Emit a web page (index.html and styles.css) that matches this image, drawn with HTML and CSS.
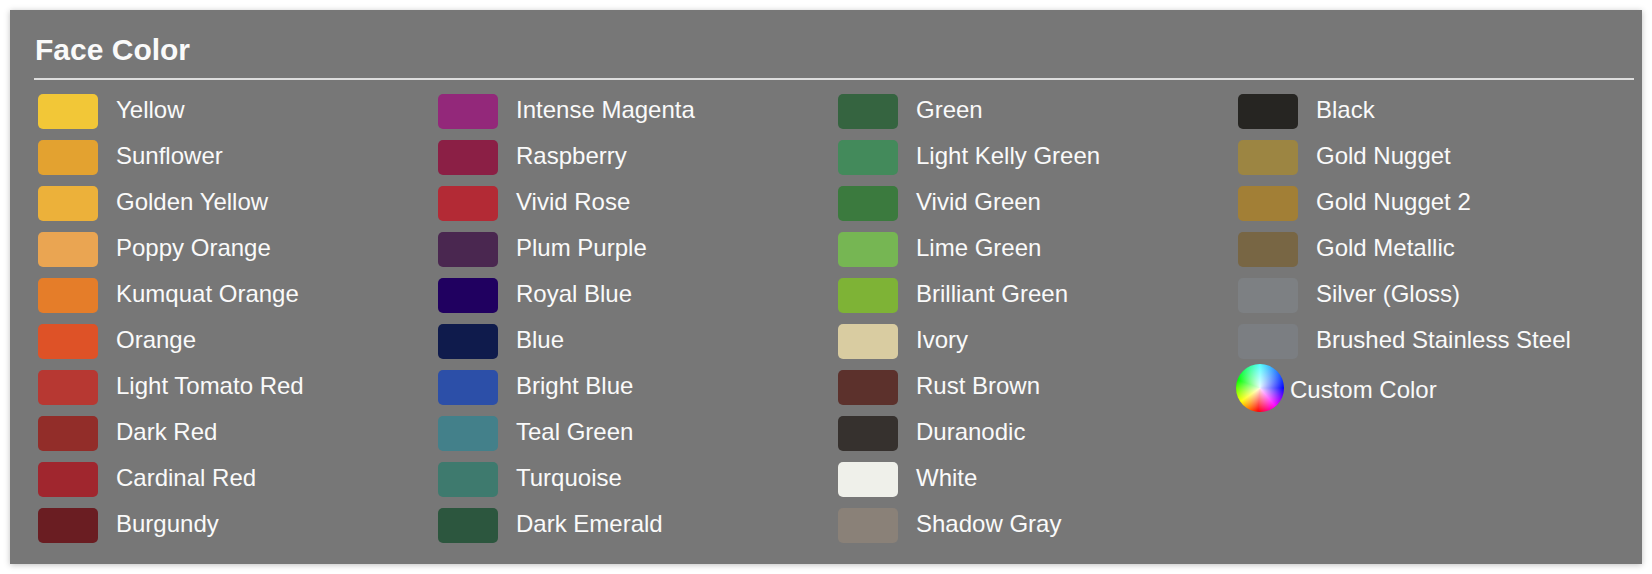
FILE: index.html
```html
<!DOCTYPE html>
<html lang="en">
<head>
    <meta charset="UTF-8">
    <meta name="viewport" content="width=device-width, initial-scale=1.0">
    <title>Face Color</title>
    <link rel="stylesheet" href="styles.css">
</head>
<body>
    <section class="panel">
        <h2 class="panel-title">Face Color</h2>
        <div class="color-grid">
            <ul class="color-column">
                <li class="color-option"><span class="swatch" style="background:#f2c737"></span><span class="color-name">Yellow</span></li>
                <li class="color-option"><span class="swatch" style="background:#e3a230"></span><span class="color-name">Sunflower</span></li>
                <li class="color-option"><span class="swatch" style="background:#ecb13a"></span><span class="color-name">Golden Yellow</span></li>
                <li class="color-option"><span class="swatch" style="background:#eaa552"></span><span class="color-name">Poppy Orange</span></li>
                <li class="color-option"><span class="swatch" style="background:#e57d29"></span><span class="color-name">Kumquat Orange</span></li>
                <li class="color-option"><span class="swatch" style="background:#de5227"></span><span class="color-name">Orange</span></li>
                <li class="color-option"><span class="swatch" style="background:#b73832"></span><span class="color-name">Light Tomato Red</span></li>
                <li class="color-option"><span class="swatch" style="background:#922d29"></span><span class="color-name">Dark Red</span></li>
                <li class="color-option"><span class="swatch" style="background:#a0262e"></span><span class="color-name">Cardinal Red</span></li>
                <li class="color-option"><span class="swatch" style="background:#6a1d22"></span><span class="color-name">Burgundy</span></li>
            </ul>
            <ul class="color-column">
                <li class="color-option"><span class="swatch" style="background:#93287a"></span><span class="color-name">Intense Magenta</span></li>
                <li class="color-option"><span class="swatch" style="background:#8b1f45"></span><span class="color-name">Raspberry</span></li>
                <li class="color-option"><span class="swatch" style="background:#b32a35"></span><span class="color-name">Vivid Rose</span></li>
                <li class="color-option"><span class="swatch" style="background:#4a2750"></span><span class="color-name">Plum Purple</span></li>
                <li class="color-option"><span class="swatch" style="background:#200060"></span><span class="color-name">Royal Blue</span></li>
                <li class="color-option"><span class="swatch" style="background:#0f1b4c"></span><span class="color-name">Blue</span></li>
                <li class="color-option"><span class="swatch" style="background:#2c4fa8"></span><span class="color-name">Bright Blue</span></li>
                <li class="color-option"><span class="swatch" style="background:#43808a"></span><span class="color-name">Teal Green</span></li>
                <li class="color-option"><span class="swatch" style="background:#3e7a6e"></span><span class="color-name">Turquoise</span></li>
                <li class="color-option"><span class="swatch" style="background:#2c563e"></span><span class="color-name">Dark Emerald</span></li>
            </ul>
            <ul class="color-column">
                <li class="color-option"><span class="swatch" style="background:#356440"></span><span class="color-name">Green</span></li>
                <li class="color-option"><span class="swatch" style="background:#438a5b"></span><span class="color-name">Light Kelly Green</span></li>
                <li class="color-option"><span class="swatch" style="background:#3b7a3e"></span><span class="color-name">Vivid Green</span></li>
                <li class="color-option"><span class="swatch" style="background:#76b653"></span><span class="color-name">Lime Green</span></li>
                <li class="color-option"><span class="swatch" style="background:#7eb336"></span><span class="color-name">Brilliant Green</span></li>
                <li class="color-option"><span class="swatch" style="background:#d9cca1"></span><span class="color-name">Ivory</span></li>
                <li class="color-option"><span class="swatch" style="background:#5c312c"></span><span class="color-name">Rust Brown</span></li>
                <li class="color-option"><span class="swatch" style="background:#36312e"></span><span class="color-name">Duranodic</span></li>
                <li class="color-option"><span class="swatch" style="background:#eff0ea"></span><span class="color-name">White</span></li>
                <li class="color-option"><span class="swatch" style="background:#8a8178"></span><span class="color-name">Shadow Gray</span></li>
            </ul>
            <ul class="color-column">
                <li class="color-option"><span class="swatch" style="background:#262522"></span><span class="color-name">Black</span></li>
                <li class="color-option"><span class="swatch" style="background:#9c8542"></span><span class="color-name">Gold Nugget</span></li>
                <li class="color-option"><span class="swatch" style="background:#a27f36"></span><span class="color-name">Gold Nugget 2</span></li>
                <li class="color-option"><span class="swatch" style="background:#786644"></span><span class="color-name">Gold Metallic</span></li>
                <li class="color-option"><span class="swatch" style="background:#7d8083"></span><span class="color-name">Silver (Gloss)</span></li>
                <li class="color-option"><span class="swatch" style="background:#7b7e82"></span><span class="color-name">Brushed Stainless Steel</span></li>
                <li class="color-option custom"><span class="color-wheel"></span><span class="color-name">Custom Color</span></li>
            </ul>
        </div>
    </section>
</body>
</html>
```

FILE: styles.css
```css
body {
    margin: 0;
    padding: 10px;
    background-color: #fff;
    font-family: "Liberation Sans", Arial, sans-serif;
}

.panel {
    width: 1632px;
    height: 554px;
    box-sizing: border-box;
    padding: 23px 8px 0 24px;
    background-color: #777;
    box-shadow: 0 1px 6px rgba(0, 0, 0, 0.25);
}

.panel-title {
    margin: 0;
    padding: 0 0 11px 1px;
    font-size: 30px;
    font-weight: bold;
    color: #fafafa;
    border-bottom: 2px solid #ddd;
}

.color-grid {
    display: grid;
    grid-template-columns: repeat(4, 400px);
    margin-top: 14px;
}

.color-column {
    list-style: none;
    margin: 0;
    padding: 0 0 0 4px;
    display: flex;
    flex-direction: column;
    gap: 11px;
}

.color-option {
    display: flex;
    align-items: flex-start;
    height: 35px;
    cursor: pointer;
}

.swatch {
    flex: none;
    width: 60px;
    height: 35px;
    border-radius: 5px;
    margin-right: 18px;
}

.color-name {
    font-size: 24px;
    line-height: 31px;
    color: #fafafa;
}

.color-option.custom {
    align-items: center;
}

.color-wheel {
    flex: none;
    width: 48px;
    height: 48px;
    margin: 0 6px 0 -2px;
    border-radius: 50%;
    background:
        radial-gradient(circle, rgba(255, 255, 255, 0.9) 0%, rgba(255, 255, 255, 0) 70%),
        conic-gradient(#5ff 0deg, #00f 90deg, #f0f 140deg, #f00 185deg, #ff0 235deg, #0f0 290deg, #5ff 360deg);
}

.color-option.custom .color-name {
    margin-top: 4px;
}
```
